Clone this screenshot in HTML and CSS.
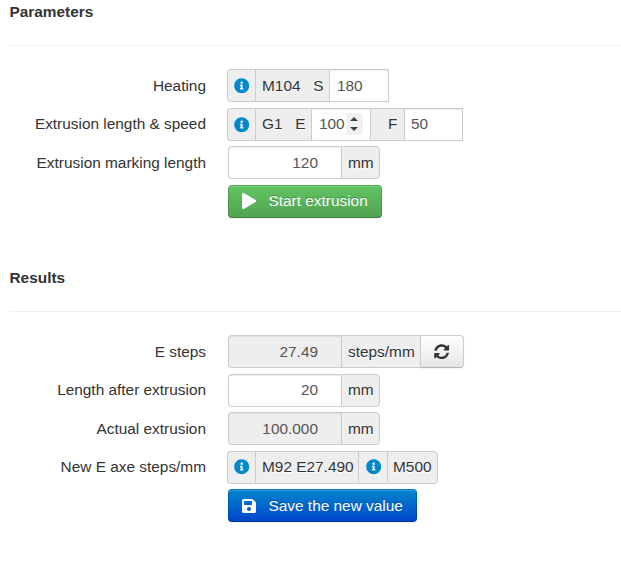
FILE: index.html
```html
<!DOCTYPE html>
<html lang="en">
<head>
<meta charset="utf-8">
<title>E-steps calibration</title>
<link rel="stylesheet" href="styles.css">
</head>
<body>
<svg class="sprite" width="0" height="0" aria-hidden="true">
  <symbol id="info" viewBox="0 0 512 512"><path d="M256 8C119.043 8 8 119.083 8 256c0 136.997 111.043 248 248 248s248-111.003 248-248C504 119.083 392.957 8 256 8zm0 110c23.196 0 42 18.804 42 42s-18.804 42-42 42-42-18.804-42-42 18.804-42 42-42zm56 254c0 6.627-5.373 12-12 12h-88c-6.627 0-12-5.373-12-12v-24c0-6.627 5.373-12 12-12h12v-64h-12c-6.627 0-12-5.373-12-12v-24c0-6.627 5.373-12 12-12h64c6.627 0 12 5.373 12 12v100h12c6.627 0 12 5.373 12 12v24z"/></symbol>
  <symbol id="play" viewBox="0 0 448 512"><path d="M424.4 214.7L72.4 6.6C43.8-10.3 0 6.1 0 47.9V464c0 37.5 40.7 60.1 72.4 41.3l352-208c31.4-18.5 31.5-64.1 0-82.6z"/></symbol>
  <symbol id="save" viewBox="0 0 448 512"><path d="M433.941 129.941l-83.882-83.882A48 48 0 0 0 316.118 32H48C21.49 32 0 53.49 0 80v352c0 26.51 21.49 48 48 48h352c26.51 0 48-21.49 48-48V163.882a48 48 0 0 0-14.059-33.941zM224 416c-35.346 0-64-28.654-64-64 0-35.346 28.654-64 64-64s64 28.654 64 64c0 35.346-28.654 64-64 64zm96-304.52V212c0 6.627-5.373 12-12 12H76c-6.627 0-12-5.373-12-12V108c0-6.627 5.373-12 12-12h228.52c3.183 0 6.235 1.264 8.485 3.515l3.48 3.48A11.996 11.996 0 0 1 320 111.48z"/></symbol>
  <symbol id="sync" viewBox="0 0 512 512"><path d="M370.72 133.28C339.458 104.008 298.888 87.962 255.848 88c-77.458.068-144.328 53.178-162.791 126.85-1.344 5.363-6.122 9.15-11.651 9.15H24.103c-7.498 0-13.194-6.807-11.807-14.176C33.933 94.924 134.813 8 256 8c66.448 0 126.791 26.136 171.315 68.685L463.03 40.97C478.149 25.851 504 36.559 504 57.941V192c0 13.255-10.745 24-24 24H345.941c-21.382 0-32.09-25.851-16.971-40.971l41.75-41.749zM32 296h134.059c21.382 0 32.09 25.851 16.971 40.971l-41.75 41.75c31.262 29.273 71.835 45.319 114.876 45.28 77.418-.07 144.315-53.144 162.787-126.849 1.344-5.363 6.122-9.15 11.651-9.15h57.304c7.498 0 13.194 6.807 11.807 14.176C478.067 417.076 377.187 504 256 504c-66.448 0-126.791-26.136-171.315-68.685L48.97 471.03C33.851 486.149 8 475.441 8 454.059V320c0-13.255 10.745-24 24-24z"/></symbol>
</svg>

<section class="panel parameters">
  <h4>Parameters</h4>
  <div class="row">
    <span class="label">Heating</span>
    <div class="group lead">
      <span class="addon info"><svg><use href="#info"/></svg></span>
      <span class="addon heat">M104 &nbsp; S</span>
      <span class="field temp end">180</span>
    </div>
  </div>
  <div class="row">
    <span class="label">Extrusion length &amp; speed</span>
    <div class="group lead">
      <span class="addon info"><svg><use href="#info"/></svg></span>
      <span class="addon move">G1 &nbsp; E</span>
      <span class="field length">100<span class="spinner"><i class="up"></i><i class="down"></i></span></span>
      <span class="addon feed">F</span>
      <span class="field speed end">50</span>
    </div>
  </div>
  <div class="row">
    <span class="label">Extrusion marking length</span>
    <div class="group">
      <span class="field value">120</span>
      <span class="addon unit">mm</span>
    </div>
  </div>
  <div class="row">
    <button class="btn success"><svg><use href="#play"/></svg>Start extrusion</button>
  </div>
</section>

<section class="panel results">
  <h4>Results</h4>
  <div class="row">
    <span class="label">E steps</span>
    <div class="group">
      <span class="field value disabled">27.49</span>
      <span class="addon steps">steps/mm</span>
      <button class="refresh" aria-label="Refresh"><svg><use href="#sync"/></svg></button>
    </div>
  </div>
  <div class="row">
    <span class="label">Length after extrusion</span>
    <div class="group">
      <span class="field value">20</span>
      <span class="addon unit">mm</span>
    </div>
  </div>
  <div class="row">
    <span class="label">Actual extrusion</span>
    <div class="group">
      <span class="field value disabled">100.000</span>
      <span class="addon unit">mm</span>
    </div>
  </div>
  <div class="row">
    <span class="label">New E axe steps/mm</span>
    <div class="group lead">
      <span class="addon info"><svg><use href="#info"/></svg></span>
      <span class="addon command">M92 E27.490</span>
      <span class="addon info second"><svg><use href="#info"/></svg></span>
      <span class="addon store">M500</span>
    </div>
  </div>
  <div class="row">
    <button class="btn primary"><svg><use href="#save"/></svg>Save the new value</button>
  </div>
</section>
</body>
</html>
```
FILE: styles.css
```css
* { box-sizing: border-box; }

body {
  margin: 0;
  padding: 1px 0 0 9px;
  background: #fff;
  color: #333;
  font: 15.4px/22px "Liberation Sans", Arial, sans-serif;
}

.sprite { display: block; }
svg { fill: currentColor; }

.panel { height: 266px; }

h4 {
  height: 45px;
  margin: 0 0 23.3px;
  padding-left: 0.5px;
  border-bottom: 1px solid #eee;
  font-size: 15.4px;
  line-height: 22px;
}

.results h4 { margin-bottom: 23.1px; }

.row {
  display: grid;
  grid-template-columns: 197px auto;
  column-gap: 22px;
  justify-content: start;
  height: 33px;
  margin-bottom: 5.5px;
}

.label { margin-top: -0.4px; text-align: right; line-height: 33px; }

.group { display: flex; height: 33px; }
.group.lead { margin-left: -1px; }

.addon, .field {
  display: flex;
  align-items: center;
  height: 33px;
  padding-left: 6px;
  border: 1px solid #ccc;
  border-right-width: 0;
  white-space: pre;
}

.addon { background: #eee; text-shadow: 0 1px 0 #fff; }
.field { background: #fff; color: #555; box-shadow: inset 0 1px 1px rgba(0, 0, 0, .075); }
.group > :first-child { border-radius: 4px 0 0 4px; }
.group > :last-child { border-right-width: 1px; border-radius: 0 4px 4px 0; }
.group > .end:last-child { border-radius: 0; }

.info { width: 28px; color: #08c; padding: 0 0 0 6.3px; }
.info svg { width: 15.4px; height: 15.4px; }
.info.second { width: 29px; padding-left: 6.6px; }
.heat { width: 74px; }
.temp { width: 60px; padding-left: 7px; }
.move { width: 56px; }
.length { width: 59px; padding-left: 7px; }
.feed { width: 34px; padding-left: 17px; }
.speed { width: 59px; }
.value { width: 113px; justify-content: flex-end; padding-right: 23px; }
.disabled { background: #eee; }
.unit { width: 39px; }
.steps { width: 79px; }
.command { width: 103px; }
.store { width: 51px; padding-left: 5px; }

.spinner {
  display: flex;
  flex-direction: column;
  align-items: center;
  justify-content: center;
  gap: 6px;
  width: 17px;
  height: 22px;
  margin-left: 1px;
  background: #f1f1f1;
}
.spinner i { border: 4px solid transparent; }
.spinner .up { border-top: 0; border-bottom-color: #404040; }
.spinner .down { border-bottom: 0; border-top-color: #404040; }

.refresh {
  display: flex;
  align-items: center;
  justify-content: center;
  width: 44px;
  height: 33px;
  padding: 0;
  border: 1px solid #ccc;
  border-bottom-color: #b3b3b3;
  background: linear-gradient(#fff, #e6e6e6);
  color: #333;
  box-shadow: inset 0 1px 0 rgba(255, 255, 255, .2), 0 1px 2px rgba(0, 0, 0, .05);
}
.refresh svg { width: 15.4px; height: 15.4px; }

.btn {
  grid-column: 2;
  display: flex;
  align-items: center;
  height: 33px;
  padding: 0 0 0 13px;
  border: 1px solid rgba(0, 0, 0, .15);
  border-bottom-color: rgba(0, 0, 0, .25);
  border-radius: 4px;
  color: #fff;
  font: inherit;
  text-shadow: 0 -1px 0 rgba(0, 0, 0, .25);
  box-shadow: inset 0 1px 0 rgba(255, 255, 255, .2), 0 1px 2px rgba(0, 0, 0, .05);
}
.btn svg { width: 14px; height: 16px; margin-right: 12.5px; }
.success { width: 154px; background: linear-gradient(#62c462, #51a351) border-box; }
.primary { width: 189px; background: linear-gradient(#08c, #04c) border-box; }
```
